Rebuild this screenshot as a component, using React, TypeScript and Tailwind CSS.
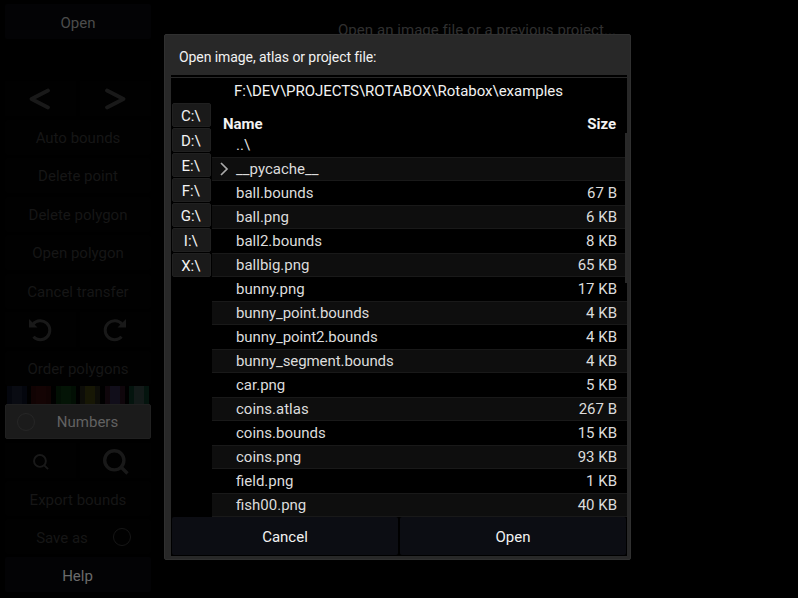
import type { ReactNode } from 'react';

const files = [
  ['..\\', ''],
  ['__pycache__', ''],
  ['ball.bounds', '67 B'],
  ['ball.png', '6 KB'],
  ['ball2.bounds', '8 KB'],
  ['ballbig.png', '65 KB'],
  ['bunny.png', '17 KB'],
  ['bunny_point.bounds', '4 KB'],
  ['bunny_point2.bounds', '4 KB'],
  ['bunny_segment.bounds', '4 KB'],
  ['car.png', '5 KB'],
  ['coins.atlas', '267 B'],
  ['coins.bounds', '15 KB'],
  ['coins.png', '93 KB'],
  ['field.png', '1 KB'],
  ['fish00.png', '40 KB'],
];

const drives = ['C:\\', 'D:\\', 'E:\\', 'F:\\', 'G:\\', 'I:\\', 'X:\\'];

const swatches = [
  { edge: 'bg-[#04060d]', mid: 'bg-[#090b12]' },
  { edge: 'bg-[#110303]', mid: 'bg-[#140404]' },
  { edge: 'bg-[#020f04]', mid: 'bg-[#041406]' },
  { edge: 'bg-[#0d0d08]', mid: 'bg-[#171705]' },
  { edge: 'bg-[#0f060b]', mid: 'bg-[#110e1a]' },
  { edge: 'bg-[#04140e]', mid: 'bg-[#131a19]' },
];

function Row({ children, className = '' }: { children: ReactNode; className?: string }) {
  return <div className={`flex h-[35px] shrink-0 items-center justify-center rounded-xs ${className}`}>{children}</div>;
}

function Faint({ children }: { children: ReactNode }) {
  return <Row className="bg-[#010101] pt-px text-[#161616]">{children}</Row>;
}

function Pair({ left, right }: { left: ReactNode; right: ReactNode }) {
  return (
    <div className="flex h-[35px] shrink-0 gap-1 text-[#191919]">
      <div className="flex flex-1 items-center justify-center bg-[#010101] pr-0.5">{left}</div>
      <div className="flex flex-1 items-center justify-center bg-[#010101] pr-0.5">{right}</div>
    </div>
  );
}

function Chevron({ flip = false }: { flip?: boolean }) {
  return (
    <svg width="22" height="22" viewBox="0 0 22 22" className={flip ? '-scale-x-100' : ''}>
      <path d="M19 2.5 2.5 11 19 19.5" fill="none" stroke="currentColor" strokeWidth="3.8" strokeLinecap="round" strokeLinejoin="round" />
    </svg>
  );
}

function Rotate({ flip = false }: { flip?: boolean }) {
  return (
    <svg width="24" height="24" viewBox="0 0 24 24" className={flip ? '-scale-x-100' : ''}>
      <path d="M5 6.2A9.5 9.5 0 1 1 5.4 18.8" fill="none" stroke="currentColor" strokeWidth="3" />
      <path d="M1 1v8.5h8.5z" fill="currentColor" />
    </svg>
  );
}

function Magnifier({ size, width }: { size: number; width: number }) {
  return (
    <svg width={size} height={size} viewBox="0 0 26 26" className="mt-0.5 ml-0.5">
      <circle cx="11.3" cy="11.3" r="9.6" fill="none" stroke="currentColor" strokeWidth={width} />
      <path d="m18 18 6.5 6.5" stroke="currentColor" strokeWidth={width} />
    </svg>
  );
}

function Sidebar() {
  return (
    <aside className="flex h-full w-[151px] shrink-0 flex-col pt-1 pl-[5px]">
      <Row className="bg-[#030305] pt-0.5 text-[#4c4c4c]">Open</Row>
      <div className="mt-[42px] flex flex-col gap-[3.5px]">
        <Pair left={<Chevron />} right={<Chevron flip />} />
        <Faint>Auto bounds</Faint>
        <Faint>Delete point</Faint>
        <Faint>Delete polygon</Faint>
        <Faint>Open polygon</Faint>
        <Faint>Cancel transfer</Faint>
        <Pair left={<Rotate />} right={<Rotate flip />} />
        <Faint>Order polygons</Faint>
      </div>
      <div className="flex h-[18.5px] shrink-0 gap-[4.4px] pl-0.5">
        {swatches.map(({ edge, mid }) => (
          <div key={edge} className={`flex w-5 justify-center ${edge}`}>
            <div className={`w-2.5 ${mid}`} />
          </div>
        ))}
      </div>
      <Row className="relative border border-[#202020] bg-[#1b1b1b] pt-px pl-[19px] text-[#626262]">
        <span className="absolute top-[8px] left-[11px] size-[18px] rounded-full border border-[#262626]" />
        Numbers
      </Row>
      <div className="mt-1 flex flex-col gap-[3.1px]">
        <Pair left={<Magnifier size={16} width={3.2} />} right={<Magnifier size={26} width={3.4} />} />
        <Row className="bg-[#010101] pt-0.5 text-[#161616]">Export bounds</Row>
        <Row className="relative bg-[#010101] pt-0.5 pr-8 text-[#161616]">
          Save as
          <span className="absolute top-[9px] left-[108px] size-[18px] rounded-full border border-[#161616]" />
        </Row>
        <Row className="bg-[#030305] pt-0.5 pr-px text-[#6b6b6b]">Help</Row>
      </div>
    </aside>
  );
}

function FileRow({ name, size, striped }: { name: string; size: string; striped: boolean }) {
  return (
    <div className={`flex h-6 shrink-0 items-center border-y pr-[10px] text-[#dcdcdc] ${striped ? 'border-[#191919] bg-[#0e0e0e]' : 'border-black'}`}>
      <span className="flex w-6 shrink-0 pl-2">
        {name === '__pycache__' && (
          <svg width="9" height="14" viewBox="0 0 9 14" fill="none" stroke="#aaa" strokeWidth="1.7">
            <path d="m1 1 6 6-6 6" />
          </svg>
        )}
      </span>
      <span className={`flex-1 ${name.length > 16 ? 'tracking-[-0.08px]' : ''}`}>{name}</span>
      <span>{size}</span>
    </div>
  );
}

function FileDialog() {
  return (
    <div className="absolute top-[34px] left-[164px] flex h-[526px] w-[467px] flex-col rounded-xs border border-[#303030] bg-[#282828] pr-[3px] pb-[3px] pl-[6px] text-[#f2f2f2]">
      <header className="flex h-10 shrink-0 items-center pt-[3px] pl-2 text-[14px] tracking-[-0.08px]">Open image, atlas or project file:</header>
      <div className="flex min-h-0 flex-1 flex-col bg-black">
        <div className="mt-[2px] h-px shrink-0 bg-[#282828]" />
        <div className="flex h-[25px] shrink-0 items-center justify-center pr-px tracking-[-0.02px]">F:\DEV\PROJECTS\ROTABOX\Rotabox\examples</div>
        <div className="flex h-[414px] shrink-0">
          <nav className="flex w-[41px] shrink-0 flex-col gap-px pl-px">
            {drives.map((drive) => (
              <div key={drive} className="flex h-6 w-[39px] items-center justify-center rounded-xs border border-[#202020] bg-[#1a1a1a] pt-0.5 pr-[1.5px]">{drive}</div>
            ))}
          </nav>
          <section className="relative flex flex-1 flex-col">
            <div className="flex h-[30px] shrink-0 items-center justify-between pt-[11px] pr-[11px] pl-[11px] font-bold">
              <span>Name</span>
              <span>Size</span>
            </div>
            {files.map(([name, size], index) => (
              <FileRow key={name} name={name} size={size} striped={index % 2 === 1} />
            ))}
            <div className="absolute top-[30px] right-0 h-[150px] w-0.5 bg-[#292929]" />
          </section>
        </div>
        <footer className="flex h-[38px] shrink-0 gap-0.5 px-px">
          <button className="flex-1 rounded-xs bg-[#0c0d13] pt-0.5">Cancel</button>
          <button className="flex-1 rounded-xs bg-[#0c0d13] pt-0.5">Open</button>
        </footer>
      </div>
    </div>
  );
}

export default function App() {
  return (
    <div className="relative flex h-[598px] w-[798px] overflow-hidden bg-black font-[Roboto,sans-serif] text-[15px] leading-5">
      <Sidebar />
      <main className="flex-1 pt-5 pl-[5px] text-center tracking-[0.05px] text-[#303030]">Open an image file or a previous project...</main>
      <FileDialog />
    </div>
  );
}
